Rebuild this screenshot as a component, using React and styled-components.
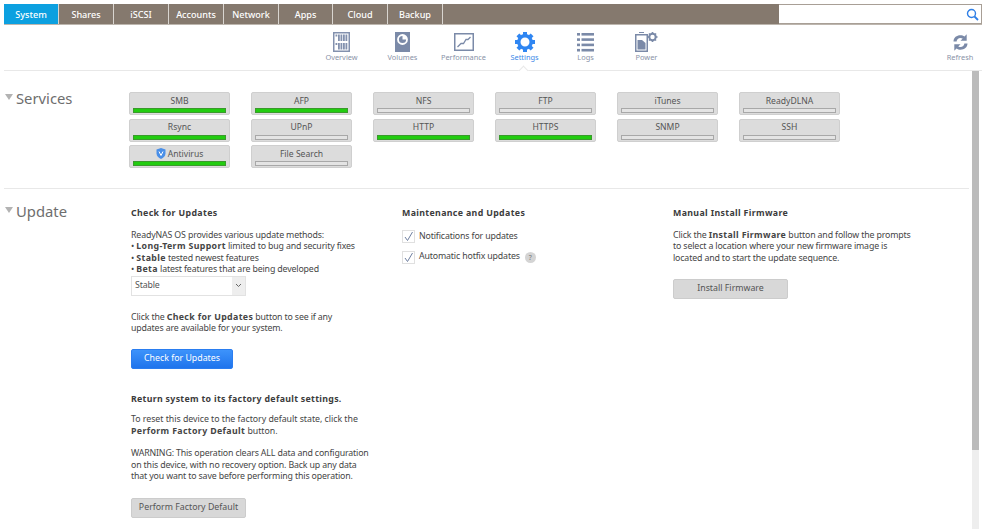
import React from 'react'
import styled, { createGlobalStyle } from 'styled-components'

const GlobalStyle = createGlobalStyle`
    html, body {
        margin: 0;
        padding: 0;
        background: #fff;
        height: 529px;
        overflow: hidden;
        font-family: "Noto Sans", "Open Sans", sans-serif;
        color: #444;
    }
    * {
        box-sizing: border-box;
    }
`

const Page = styled.div`
    width: 999px;
    height: 529px;
    padding: 4px 17px 0 4px;
    overflow: hidden;
`

const TopBar = styled.div`
    display: flex;
    height: 21px;
    background: #85796e;
    border-bottom: 1px solid #bdb6ae;
`

const Tab = styled.div`
    width: ${p => p.$w}px;
    height: 20px;
    display: flex;
    align-items: center;
    justify-content: center;
    border-right: 1px solid #d9d5d0;
    background: ${p => (p.$active ? '#0ca0e0' : '#85796e')};
    color: #fff;
    font-size: 9.1px;
    font-weight: 500;
`

const Search = styled.div`
    margin-left: auto;
    width: 203px;
    height: 20px;
    background: #fff;
    border: 1px solid #a89f96;
    border-left: none;
    display: flex;
    align-items: center;
    justify-content: flex-end;
    padding-right: 2px;
`

const SubNav = styled.div`
    position: relative;
    display: flex;
    height: 46px;
    padding-left: 307px;
    border-bottom: 1px solid #e8e8e8;
`

const NavItem = styled.div`
    width: 61px;
    display: flex;
    flex-direction: column;
    align-items: center;
    padding-top: 7px;
    color: ${p => (p.$active ? '#3b88e8' : '#8a93a8')};
    font-size: 7.4px;
    line-height: 10px;
`

const NavIcon = styled.div`
    height: 20px;
    display: flex;
    align-items: center;
    justify-content: center;
`

const RefreshItem = styled(NavItem)`
    margin-left: auto;
    margin-right: -8px;
    width: 60px;
`

const Notch = styled.div`
    position: absolute;
    left: 516px;
    bottom: -4px;
    width: 7px;
    height: 7px;
    background: #fff;
    border-left: 1px solid #e8e8e8;
    border-top: 1px solid #e8e8e8;
    transform: rotate(45deg);
`

const ScrollBar = styled.div`
    position: absolute;
    left: 972px;
    top: 71px;
    width: 7px;
    height: 458px;
    background: #eeeeee;
`

const ScrollThumb = styled.div`
    width: 7px;
    height: 379px;
    background: #bbbbbb;
`

const Section = styled.section`
    display: flex;
    padding-top: ${p => p.$top}px;
    width: 965px;
    height: ${p => p.$height}px;
    border-bottom: ${p => (p.$line ? '1px solid #e8e8e8' : 'none')};
`

const SectionHead = styled.div`
    width: 125px;
    height: 20px;
    margin-top: ${p => p.$shift || 0}px;
    display: flex;
    align-items: flex-start;
    padding-left: 1px;
    color: #6e6e6e;
    font-size: 14.8px;
    line-height: 20px;
`

const Arrow = styled.span`
    width: 0;
    height: 0;
    margin: 6px 3px 0 0;
    border-left: 4.5px solid transparent;
    border-right: 4.5px solid transparent;
    border-top: 6px solid #b3b3b3;
`

const ServiceGrid = styled.div`
    display: grid;
    grid-template-columns: repeat(6, 101px);
    grid-auto-rows: 23px;
    column-gap: 21px;
    row-gap: 3.5px;
`

const ServiceButton = styled.div`
    background: #dcdcdc;
    border: 1px solid #cfcfcf;
    border-radius: 2px;
    padding: 0 3px;
    display: flex;
    flex-direction: column;
    color: #555;
    font-size: 8.6px;
`

const ServiceName = styled.div`
    height: 13px;
    display: flex;
    align-items: center;
    justify-content: center;
    gap: 2px;
    padding-top: 2px;
`

const StatusBar = styled.div`
    height: 5px;
    margin-top: 2px;
    background: ${p => (p.$on ? '#22cc10' : '#e4e4e4')};
    border: 1px solid ${p => (p.$on ? '#3a9a2c' : '#a8a8a8')};
`

const Columns = styled.div`
    display: grid;
    grid-template-columns: repeat(3, 271px);
    padding: 6px 0 0 2px;
`

const Column = styled.div`
    font-size: 8.8px;
    line-height: 11.5px;
    letter-spacing: -0.15px;
    color: #454545;

    b {
        letter-spacing: 0.35px;
    }
`

const Title = styled.div`
    font-weight: 700;
    letter-spacing: ${p => p.$spacing || 0.35}px;
    color: #3c3c3c;
    margin-bottom: ${p => p.$gap}px;
`

const Para = styled.p`
    margin: 0 0 ${p => p.$gap || 0}px;
    width: 238px;
    letter-spacing: ${p => (p.$loose ? '-0.03px' : 'inherit')};
`

const Select = styled.div`
    display: flex;
    width: 115px;
    height: 20px;
    margin: 0 0 16px;
    border: 1px solid #e2e2e2;
    align-items: center;
    justify-content: space-between;
    padding-left: 3px;
    color: #555;
`

const SelectArrow = styled.span`
    width: 13px;
    height: 18px;
    background: #eeeeee;
    display: flex;
    align-items: center;
    justify-content: center;
`

const Button = styled.div`
    width: ${p => p.$w}px;
    height: 20px;
    margin-bottom: ${p => p.$gap || 0}px;
    border-radius: 2px;
    display: flex;
    align-items: center;
    justify-content: center;
    background: ${p => (p.$primary ? 'linear-gradient(#3d93fb, #1f74ec)' : '#d8d8d8')};
    border: 1px solid ${p => (p.$primary ? '#2a7df0' : '#cccccc')};
    color: ${p => (p.$primary ? '#fff' : '#555')};
    font-size: 8.8px;
    letter-spacing: 0;
`

const CheckRow = styled.div`
    display: flex;
    align-items: center;
    height: 14px;
    margin-bottom: 6.5px;
    gap: 4px;
`

const CheckBox = styled.span`
    width: 13px;
    height: 13px;
    background: #fff;
    border: 1px solid #e0e0e0;
    display: flex;
    align-items: center;
    justify-content: center;
`

const Help = styled.span`
    width: 11px;
    height: 11px;
    border-radius: 50%;
    background: #d4d4d4;
    color: #777;
    font-size: 7px;
    line-height: 11px;
    text-align: center;
    margin-left: 1px;
`

const OverviewIcon = () => (
    <svg width="17" height="20" viewBox="0 0 17 20">
        <rect width="17" height="20" fill="#8391ae" />
        <rect x="1.5" y="1.5" width="14" height="17" fill="#fff" />
        {[2.5, 5, 7.5, 10, 12.5].map(x => (
            <g key={x}>
                <rect x={x} y="2.5" width="1.8" height={x === 2.5 ? 2 : 6.5} fill="#8391ae" />
                <rect x={x} y="11" width="1.8" height={x === 2.5 ? 2 : 6.5} fill="#8391ae" />
            </g>
        ))}
    </svg>
)

const VolumesIcon = () => (
    <svg width="15" height="20" viewBox="0 0 15 20">
        <rect width="15" height="20" fill="#7b8aa8" />
        <circle cx="7.5" cy="7.5" r="4.5" fill="none" stroke="#fff" strokeWidth="1.8" />
        <path d="M7.5 7.5L12 7.5A4.5 4.5 0 0 0 7.5 3Z" fill="#fff" />
    </svg>
)

const PerformanceIcon = () => (
    <svg width="20" height="18" viewBox="0 0 20 18">
        <rect x="0.75" y="0.75" width="18.5" height="16.5" fill="#fff" stroke="#7b8aa8" strokeWidth="1.5" />
        <path d="M3.5 14L7 10.5H9.5L12 6.5H14L16.5 4" fill="none" stroke="#7b8aa8" strokeWidth="1.3" />
    </svg>
)

const SettingsIcon = () => (
    <svg width="20" height="20" viewBox="0 0 20 20">
        <circle cx="10" cy="10" r="6.2" fill="none" stroke="#2f86f2" strokeWidth="3.4" />
        {[0, 45, 90, 135, 180, 225, 270, 315].map(a => (
            <rect key={a} x="8" y="0" width="4" height="4" fill="#2f86f2" transform={`rotate(${a} 10 10)`} />
        ))}
    </svg>
)

const LogsIcon = () => (
    <svg width="17" height="19" viewBox="0 0 17 19" fill="#7b8aa8">
        {[0, 5.3, 10.6, 15.9].map(y => (
            <g key={y}>
                <rect x="0" y={y} width="3" height="2.6" />
                <rect x="4.5" y={y} width="12.5" height="2.6" />
            </g>
        ))}
    </svg>
)

const PowerIcon = () => (
    <svg width="23" height="20" viewBox="0 0 23 20">
        <rect x="4" y="0" width="5" height="1" fill="#7b8aa8" />
        <rect x="0.75" y="2.75" width="11.5" height="16.5" fill="#fff" stroke="#7b8aa8" strokeWidth="1.5" />
        <path d="M2.5 8H7L10.5 11V17.5H2.5Z" fill="#7b8aa8" />
        <circle cx="17.5" cy="5" r="3.2" fill="none" stroke="#7b8aa8" strokeWidth="2" />
        {[0, 45, 90, 135, 180, 225, 270, 315].map(a => (
            <rect key={a} x="16.7" y="0" width="1.6" height="1.8" fill="#7b8aa8" transform={`rotate(${a} 17.5 5)`} />
        ))}
    </svg>
)

const RefreshIcon = () => (
    <svg width="17" height="19" viewBox="0 0 16 19" fill="#7b8aa8">
        <path d="M1 8.4C1.2 4.4 4.2 2.2 7.8 2.2C9.4 2.2 10.9 2.7 12 3.6L14.2 1.2V7.8H8L10.2 5.6C9.5 5.1 8.7 4.9 7.8 4.9C5.9 4.9 4.4 6.1 4.1 8.4Z" />
        <path d="M15 10.6C14.8 14.6 11.8 16.8 8.2 16.8C6.6 16.8 5.1 16.3 4 15.4L1.8 17.8V11.2H8L5.8 13.4C6.5 13.9 7.3 14.1 8.2 14.1C10.1 14.1 11.6 12.9 11.9 10.6Z" />
    </svg>
)

const ShieldIcon = () => (
    <svg width="10" height="11" viewBox="0 0 10 11">
        <path d="M5 0L9.5 1.5V5.5C9.5 8 7.5 10 5 11C2.5 10 0.5 8 0.5 5.5V1.5Z" fill="#4a8fe8" />
        <path d="M3 3.5L5 7.5L7 3.5" fill="none" stroke="#fff" strokeWidth="1" />
    </svg>
)

const SearchIcon = () => (
    <svg width="13" height="13" viewBox="0 0 13 13" fill="none" stroke="#2f7fe6" strokeWidth="1.4">
        <circle cx="5.5" cy="5.5" r="4" />
        <path d="M8.5 8.5L12 12" strokeWidth="1.8" />
    </svg>
)

const CheckIcon = () => (
    <svg width="11" height="11" viewBox="0 0 11 11" fill="none" stroke="#6f7fa0" strokeWidth="1">
        <path d="M2 6L4.5 9.5L9.5 1" />
    </svg>
)

const tabs = [
    ['System', 55],
    ['Shares', 55],
    ['iSCSI', 55],
    ['Accounts', 55],
    ['Network', 55],
    ['Apps', 54],
    ['Cloud', 55],
    ['Backup', 55],
]

const navItems = [
    ['Overview', OverviewIcon],
    ['Volumes', VolumesIcon],
    ['Performance', PerformanceIcon],
    ['Settings', SettingsIcon],
    ['Logs', LogsIcon],
    ['Power', PowerIcon],
]

const services = [
    ['SMB', true],
    ['AFP', true],
    ['NFS', false],
    ['FTP', false],
    ['iTunes', false],
    ['ReadyDLNA', false],
    ['Rsync', true],
    ['UPnP', false],
    ['HTTP', true],
    ['HTTPS', true],
    ['SNMP', false],
    ['SSH', false],
    ['Antivirus', true],
    ['File Search', false],
]

function App() {
    return (
        <Page>
            <GlobalStyle />
            <TopBar>
                {tabs.map(([name, w], i) => (
                    <Tab key={name} $w={w} $active={i === 0}>{name}</Tab>
                ))}
                <Search><SearchIcon /></Search>
            </TopBar>
            <SubNav>
                {navItems.map(([name, Icon]) => (
                    <NavItem key={name} $active={name === 'Settings'}>
                        <NavIcon><Icon /></NavIcon>
                        {name}
                    </NavItem>
                ))}
                <RefreshItem>
                    <NavIcon><RefreshIcon /></NavIcon>
                    Refresh
                </RefreshItem>
                <Notch />
            </SubNav>
            <ScrollBar><ScrollThumb /></ScrollBar>
            <Section $top={21} $height={118} $line>
                <SectionHead $shift={-4}><Arrow />Services</SectionHead>
                <ServiceGrid>
                    {services.map(([name, on]) => (
                        <ServiceButton key={name}>
                            <ServiceName>
                                {name === 'Antivirus' && <ShieldIcon />}
                                {name}
                            </ServiceName>
                            <StatusBar $on={on} />
                        </ServiceButton>
                    ))}
                </ServiceGrid>
            </Section>
            <Section $top={13} $height={340}>
                <SectionHead $shift={-1}><Arrow />Update</SectionHead>
                <Columns>
                    <Column>
                        <Title $gap={10}>Check for Updates</Title>
                        <Para>
                            ReadyNAS OS provides various update methods:<br />
                            • <b>Long-Term Support</b> limited to bug and security fixes<br />
                            • <b>Stable</b> tested newest features<br />
                            • <b>Beta</b> latest features that are being developed
                        </Para>
                        <Select>
                            Stable
                            <SelectArrow>
                                <svg width="7" height="5" viewBox="0 0 7 5" fill="none" stroke="#666" strokeWidth="1">
                                    <path d="M1 1L3.5 3.5L6 1" />
                                </svg>
                            </SelectArrow>
                        </Select>
                        <Para $gap={14}>
                            Click the <b>Check for Updates</b> button to see if any<br />
                            updates are available for your system.
                        </Para>
                        <Button $primary $w={102} $gap={25}>Check for Updates</Button>
                        <Title $gap={9} $spacing={0.3}>Return system to its factory default settings.</Title>
                        <Para $gap={11} $loose>
                            To reset this device to the factory default state, click the <b>Perform Factory Default</b> button.
                        </Para>
                        <Para $gap={15}>
                            WARNING: This operation clears ALL data and configuration on this device, with no recovery option. Back up any data that you want to save before performing this operation.
                        </Para>
                        <Button $w={115}>Perform Factory Default</Button>
                    </Column>
                    <Column>
                        <Title $gap={10}>Maintenance and Updates</Title>
                        <CheckRow><CheckBox><CheckIcon /></CheckBox>Notifications for updates</CheckRow>
                        <CheckRow><CheckBox><CheckIcon /></CheckBox>Automatic hotfix updates<Help>?</Help></CheckRow>
                    </Column>
                    <Column>
                        <Title $gap={10}>Manual Install Firmware</Title>
                        <Para $gap={15}>
                            Click the <b>Install Firmware</b> button and follow the prompts to select a location where your new firmware image is located and to start the update sequence.
                        </Para>
                        <Button $w={115}>Install Firmware</Button>
                    </Column>
                </Columns>
            </Section>
        </Page>
    )
}

export default App
